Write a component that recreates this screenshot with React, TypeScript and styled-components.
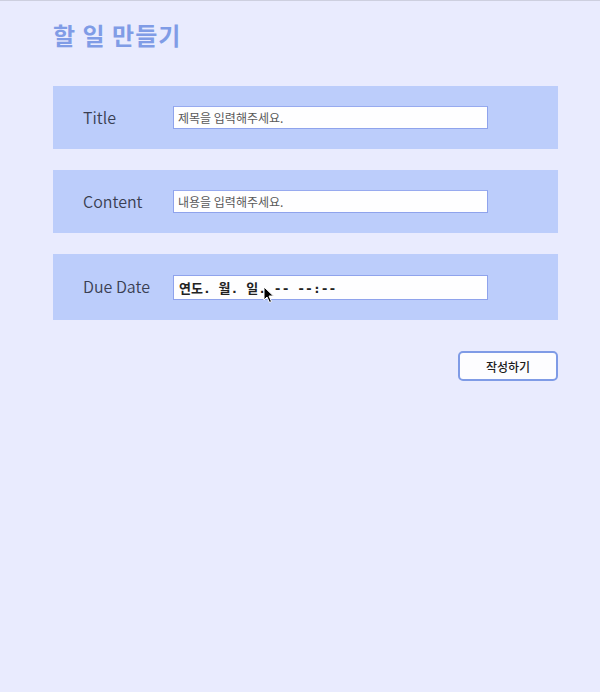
import React from "react";
import styled, { createGlobalStyle } from "styled-components";

const Global = createGlobalStyle`
  html, body { margin: 0; padding: 0; }
  body {
    background: #e9ebfe;
    font-family: "Noto Sans CJK KR", "Noto Sans", sans-serif;
    min-height: 692px;
  }
`;

const Page = styled.div`
  min-height: 691px;
  border-top: 1px solid #cdcfdf;
  padding: 0 42px 0 53px;
  display: flex;
  flex-direction: column;
`;

const Heading = styled.h1`
  margin: 17px 0 0;
  font-size: 24px;
  line-height: 34px;
  font-weight: 700;
  color: #809ce6;
  letter-spacing: 1px;
`;

const Form = styled.div`
  margin-top: 34px;
  display: flex;
  flex-direction: column;
  gap: 21px;
`;

const Row = styled.div<{ $h: number }>`
  height: ${(p) => p.$h}px;
  background: #bccdfb;
  display: flex;
  align-items: center;
  padding-left: 30px;
  box-sizing: border-box;
`;

const Label = styled.label`
  width: 90px;
  margin-bottom: 2px;
  font-family: "Noto Sans CJK KR", "Noto Sans", sans-serif;
  font-size: 16px;
  font-weight: 350;
  color: #3a3f52;
`;

const Field = styled.input`
  width: 315px;
  height: 23px;
  box-sizing: border-box;
  border: 1px solid #8fa3ec;
  border-top-color: #97aaef;
  background: #fefeff;
  padding: 0 4px;
  font-family: "Noto Sans CJK KR", "Noto Sans", sans-serif;
  font-size: 12px;
  color: #444;
  outline: none;
  &::placeholder { color: #585858; }
`;

const DateBox = styled.div`
  position: relative;
  width: 315px;
  height: 25px;
  box-sizing: border-box;
  border: 1px solid #8fa3ec;
  background: #fefeff;
  padding: 0 5px;
  display: flex;
  align-items: center;
  font-family: "DejaVu Sans Mono", "Noto Sans CJK KR", monospace;
  font-size: 13px;
  font-weight: 700;
  color: #222;
  white-space: pre;
`;

const Cursor = styled.svg`
  position: absolute;
  left: 89px;
  top: 10px;
`;

const Actions = styled.div`
  margin-top: 31px;
  display: flex;
  justify-content: flex-end;
`;

const Submit = styled.button`
  width: 100px;
  height: 30px;
  border: 2px solid #7f9be6;
  border-radius: 5px;
  background: #fdfdff;
  font-family: "Noto Sans CJK KR", sans-serif;
  font-size: 12px;
  font-weight: 500;
  color: #1c1c1c;
  cursor: pointer;
`;

export default function App() {
  return (
    <>
      <Global />
      <Page>
        <Heading>할 일 만들기</Heading>
        <Form>
          <Row $h={63}>
            <Label>Title</Label>
            <Field placeholder="제목을 입력해주세요." />
          </Row>
          <Row $h={63}>
            <Label>Content</Label>
            <Field placeholder="내용을 입력해주세요." />
          </Row>
          <Row $h={66}>
            <Label>Due Date</Label>
            <DateBox>
              {"연도. 월. 일. -- --:--"}
              <Cursor width="12" height="18" viewBox="0 0 12 18">
                <path d="M1 1 L1 14 L4 11 L6.5 16.5 L8.5 15.5 L6 10 L10.5 10 Z" fill="#000" stroke="#fff" strokeWidth="1" />
              </Cursor>
            </DateBox>
          </Row>
        </Form>
        <Actions>
          <Submit>작성하기</Submit>
        </Actions>
      </Page>
    </>
  );
}
